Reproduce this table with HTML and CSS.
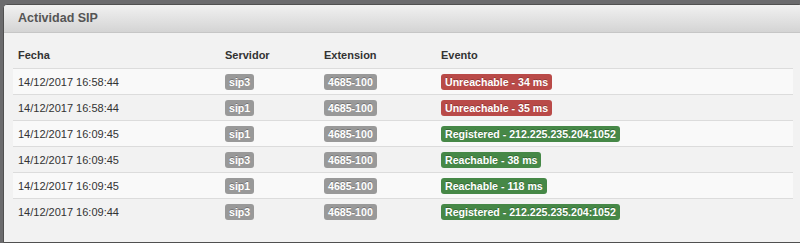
FILE: index.html
```html
<!DOCTYPE html>
<html>
<head>
<meta charset="utf-8">
<link rel="stylesheet" href="styles.css">
</head>
<body>
<div class="panel">
  <div class="panel-head">Actividad SIP</div>
  <div class="panel-body">
    <table class="grid">
      <thead>
        <tr><th class="c-date">Fecha</th><th class="c-srv">Servidor</th><th class="c-ext">Extension</th><th>Evento</th></tr>
      </thead>
      <tbody>
        <tr class="odd"><td>14/12/2017 16:58:44</td><td><span class="label">sip3</span></td><td><span class="label">4685-100</span></td><td><span class="label red">Unreachable - 34 ms</span></td></tr>
        <tr><td>14/12/2017 16:58:44</td><td><span class="label">sip1</span></td><td><span class="label">4685-100</span></td><td><span class="label red">Unreachable - 35 ms</span></td></tr>
        <tr class="odd"><td>14/12/2017 16:09:45</td><td><span class="label">sip1</span></td><td><span class="label">4685-100</span></td><td><span class="label green">Registered - 212.225.235.204:1052</span></td></tr>
        <tr><td>14/12/2017 16:09:45</td><td><span class="label">sip3</span></td><td><span class="label">4685-100</span></td><td><span class="label green">Reachable - 38 ms</span></td></tr>
        <tr class="odd"><td>14/12/2017 16:09:45</td><td><span class="label">sip1</span></td><td><span class="label">4685-100</span></td><td><span class="label green">Reachable - 118 ms</span></td></tr>
        <tr><td>14/12/2017 16:09:44</td><td><span class="label">sip3</span></td><td><span class="label">4685-100</span></td><td><span class="label green">Registered - 212.225.235.204:1052</span></td></tr>
      </tbody>
    </table>
  </div>
</div>
</body>
</html>
```
FILE: styles.css
```css
html, body {
  margin: 0;
  overflow: hidden;
}
body {
  background: #6b6b6d;
  padding: 4px 0 0 3px;
  height: 243px;
  box-sizing: border-box;
  font-family: "Liberation Sans", Arial, sans-serif;
}
.panel {
  width: 800px;
  box-sizing: border-box;
  border: 1px solid #505050;
  border-radius: 4px 4px 0 0;
  background: #f2f2f2;
  overflow: hidden;
}
.panel-head {
  height: 27px;
  line-height: 27px;
  padding-left: 14px;
  font-size: 12.5px;
  font-weight: bold;
  color: #555;
  background: linear-gradient(#f1f1f1, #d4d4d4);
  border-bottom: 1px solid #c6c6c6;
}
.panel-body {
  padding: 9px 8px 18px 9px;
}
.grid {
  width: 780px;
  border-collapse: separate;
  border-spacing: 0;
  font-size: 11px;
  color: #333;
}
.grid th {
  text-align: left;
  font-weight: bold;
  padding: 5px;
  line-height: 16px;
  color: #333;
}
.grid td {
  padding: 5px 5px 4px;
  line-height: 16px;
  border-top: 1px solid #dcdcdc;
}
.grid tr.odd td {
  background: #f9f9f9;
}
.c-date { width: 197px; }
.c-srv { width: 89px; }
.c-ext { width: 107px; }
.label {
  display: inline-block;
  vertical-align: top;
  font-size: 10.6px;
  font-weight: bold;
  line-height: 12px;
  padding: 2px 4px;
  border-radius: 3px;
  color: #fff;
  background: #999;
  text-shadow: 0 -1px 0 rgba(0,0,0,.25);
  white-space: nowrap;
}
.label.red { background: #b94a48; }
.label.green { background: #468847; }
```
